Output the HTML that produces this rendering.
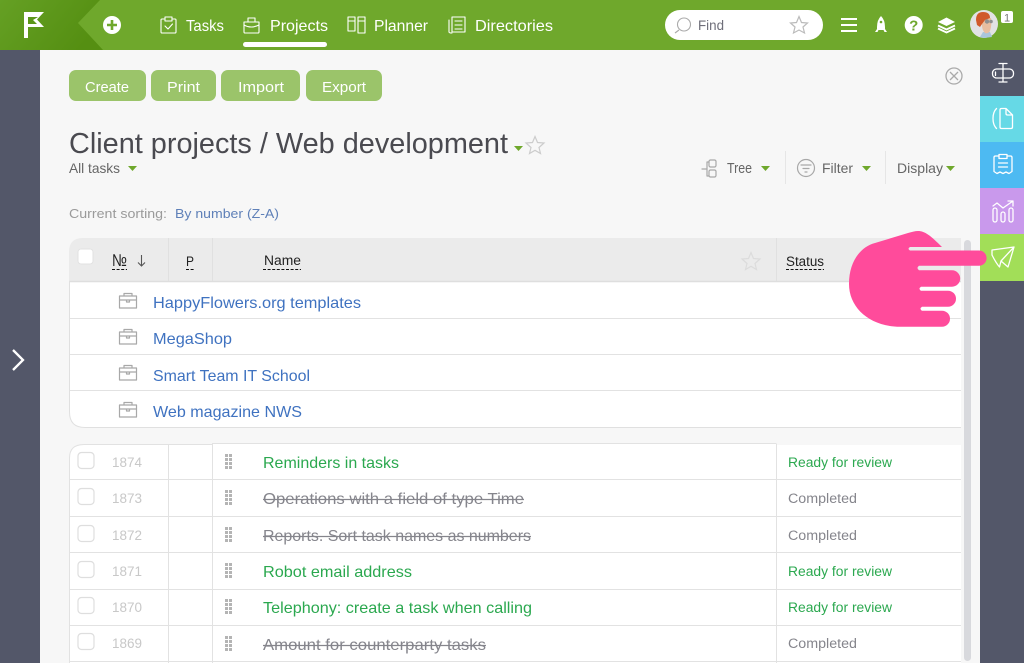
<!DOCTYPE html>
<html><head><meta charset="utf-8"><title>Client projects</title>
<style>
html,body{margin:0;padding:0;width:1024px;height:663px;overflow:hidden;background:#f7f7f7}
svg{display:block}
text{font-family:"Liberation Sans",sans-serif}
.n{fill:#fff;font-size:16px}
.b{fill:#fff;font-size:15px}
.l{fill:#3f72c0;font-size:16px}
.g{fill:#2ba84f;font-size:16px}
.c{fill:#85858c;font-size:16px}
.no{fill:#c8c8c8;font-size:14px}
.sg{fill:#2ba84f;font-size:13.5px}
.sc{fill:#85858c;font-size:13.5px}
.h{fill:#222;font-size:13.5px}
.t{fill:#666;font-size:14px}
.i{fill:none;stroke:#fff;stroke-width:1.1;stroke-linejoin:round;stroke-linecap:round}
.gi{fill:none;stroke:#a8a8a8;stroke-width:1.2;stroke-linejoin:round;stroke-linecap:round}
.ln{stroke:#e2e2e2;stroke-width:1}
.da{stroke:#111;stroke-width:1;stroke-dasharray:3 1.6}
.cb{fill:#fff;stroke:#dedede;stroke-width:1.2}
.st{stroke:#85858c;stroke-width:1.2}
</style></head>
<body>
<svg width="1024" height="663" viewBox="0 0 1024 663" xmlns="http://www.w3.org/2000/svg">
<defs><linearGradient id="lg" x1="0" y1="0" x2="1" y2="0.4"><stop offset="0" stop-color="#65a024"/><stop offset="1" stop-color="#558f12"/></linearGradient></defs>
<rect width="1024" height="663" fill="#f7f7f7"/>
<rect x="0" y="50" width="40" height="613" fill="#535769"/>
<rect x="980" y="50" width="44" height="613" fill="#535769"/>
<rect x="0" y="0" width="1024" height="50" fill="#6fa82c"/>
<polygon points="0,0 100,0 78,23 103,50 0,50" fill="url(#lg)"/>
<path d="M24 12H44L37 19.500 44 27H28V38H24Z" fill="#fff"/>
<path d="M28 17H38L33 20 37 24H28Z" fill="#5b9619"/>
<circle cx="112" cy="25" r="9" fill="#fff"/><path d="M107 25H117M112 20V30" stroke="#6fa82c" stroke-width="2.600"/>

<!-- nav -->
<path class="i" d="M164 19H162Q161 19 161 20V32Q161 33 162 33H175Q176 33 176 32V20Q176 19 175 19H173M165 17H172V21H165ZM165 26L168 29 172.500 24"/>
<text class="n" x="186" y="31" textLength="38" lengthAdjust="spacingAndGlyphs">Tasks</text>
<path class="i" d="M244 22H259V32Q259 33 258 33H245Q244 33 244 32ZM244 22V25Q251 29 259 25V22M248 22V18H255V22"/>
<text class="n" x="270" y="31" textLength="58" lengthAdjust="spacingAndGlyphs">Projects</text>
<rect x="243" y="42" width="84" height="5" rx="2.500" fill="#fff"/>
<path class="i" d="M348 17H355V31H348ZM358 17H365V33H358ZM348 21H355M358 21H365"/>
<text class="n" x="374" y="31" textLength="54" lengthAdjust="spacingAndGlyphs">Planner</text>
<path class="i" d="M452 17H465V32H452ZM449 20V32Q449 33 452 33M455 21H462M455 25H462M455 29H462"/>
<text class="n" x="475" y="31" textLength="78" lengthAdjust="spacingAndGlyphs">Directories</text>

<!-- search -->
<rect x="665" y="10" width="158" height="30" rx="15" fill="#fff"/>
<circle cx="684" cy="24.500" r="6.500" fill="none" stroke="#aaa" stroke-width="1.100"/><path d="M679 30L675 33" stroke="#aaa" stroke-width="1.100"/>
<text x="698" y="30" font-size="14" fill="#6f6f7a" textLength="26" lengthAdjust="spacingAndGlyphs">Find</text>
<path d="M799 16.500L801.500 22.500 807.500 23 803 27 804.500 33 799 30 793.500 33 795 27 790.500 23 796.500 22.500Z" fill="none" stroke="#bbb" stroke-width="1.200"/>
<path d="M841 19H857M841 25H857M841 31H857" stroke="#fff" stroke-width="2"/>
<path d="M881 16Q885 20 885 27V29L887 32H884.500L883.500 30H878.500L877.500 32H875L877 29V27Q877 20 881 16Z" fill="#fff"/><circle cx="881" cy="22" r="1.300" fill="#6fa82c"/>
<circle cx="913.700" cy="25" r="9" fill="#fff"/>
<text x="913.700" y="30.500" font-size="15" font-weight="700" fill="#6fa82c" text-anchor="middle">?</text>
<path d="M946.500 17.500L955 22 946.500 26 938 22Z" fill="#fff"/><path d="M938 25.500L946.500 29.500 955 25.500M938 28.500L946.500 32.500 955 28.500" fill="none" stroke="#fff" stroke-width="1.800"/>
<circle cx="984" cy="24" r="14" fill="#e2e2e4"/>
<path d="M983 32L990 32 992 37 984 38 980 37Z" fill="#a9c6dc"/>
<path d="M981 18H991Q992 25 990 31 988 34 985 33 982 30 982 25Z" fill="#e8bea0"/>
<path d="M976 20Q976 12 983 12 990 12 990 18L985 20 982 24 980 27 977 25Z" fill="#d0592a"/>
<circle cx="987" cy="21.500" r="2.200" fill="#8f9090"/><circle cx="991" cy="21.500" r="1.800" fill="#8f9090"/>
<rect x="1001" y="11" width="12" height="12" rx="2" fill="#fff"/>
<text x="1007" y="21.500" font-size="11" fill="#777" text-anchor="middle">1</text>

<!-- right tabs -->
<rect x="980" y="96" width="44" height="46" fill="#66d9e6"/>
<rect x="980" y="142" width="44" height="46" fill="#4dbaf2"/>
<rect x="980" y="188" width="44" height="46" fill="#c999ec"/>
<rect x="980" y="234" width="44" height="47" fill="#a2de58"/>
<g class="i" stroke-width="1.300" style="stroke-width:1.300">
<rect x="992.500" y="69" width="21" height="9" rx="4"/>
<path d="M1003 63.500V82M999 63.500H1007M999 82H1007M995.500 72V75.500"/>
<path d="M1000 110Q1000 108.500 1001.500 108.500H1006L1012.500 115V127Q1012.500 128.500 1011 128.500H1001.500Q1000 128.500 1000 127ZM1006 108.500V113.500Q1006 115 1007.500 115H1012.500M996.500 108.500Q993 112 993 118.500 993 125 996.500 128.500"/>
<path d="M999 156H995.500Q994 156 994 157.500V171.500L997 173.500 1000 172 1003 173.500 1006 172 1009 173.500 1012 171.500V157.500Q1012 156 1010.500 156H1007M999 154.500H1007V158.500H999ZM998.500 163H1007.500M998.500 167H1007.500"/>
<path d="M993 206L997 203 1003 208 1013 201M1008 201H1013V206"/>
<rect x="993" y="208" width="4" height="14" rx="2"/><rect x="1001" y="212" width="4" height="10" rx="2"/><rect x="1009" y="208" width="4" height="14" rx="2"/>
<path d="M992 250L1014 247 1008 267 1001 261 999.500 267Q996 263 992 255ZM1014 247L1001 261"/>
</g>

<!-- left chevron -->
<path d="M13 350L23 360 13 370" fill="none" stroke="#fff" stroke-width="2.300"/>

<!-- close -->
<circle cx="954" cy="76" r="8" fill="none" stroke="#aaa" stroke-width="1.300"/><path d="M950 72L958 80M958 72L950 80" stroke="#aaa" stroke-width="1.300"/>

<!-- buttons -->
<g fill="#9bc46a"><rect x="69" y="70" width="77" height="31" rx="7"/><rect x="151" y="70" width="65" height="31" rx="7"/><rect x="221" y="70" width="79" height="31" rx="7"/><rect x="306" y="70" width="76" height="31" rx="7"/></g>
<text class="b" x="85" y="92" textLength="44" lengthAdjust="spacingAndGlyphs">Create</text>
<text class="b" x="167" y="92" textLength="33" lengthAdjust="spacingAndGlyphs">Print</text>
<text class="b" x="238" y="92" textLength="46" lengthAdjust="spacingAndGlyphs">Import</text>
<text class="b" x="322" y="92" textLength="44" lengthAdjust="spacingAndGlyphs">Export</text>

<!-- title -->
<text x="69" y="153" font-size="29" fill="#4a4a50" textLength="439" lengthAdjust="spacingAndGlyphs">Client projects / Web development</text>
<path d="M514 146H523L518.500 151Z" fill="#6fa82c"/>
<path d="M535 136.500L537.500 142.500 544 143 539 147.500 540.500 153.500 535 150.300 529.500 153.500 531 147.500 526 143 532.500 142.500Z" fill="none" stroke="#ccc" stroke-width="1.200"/>
<text class="t" x="69" y="173" textLength="51" lengthAdjust="spacingAndGlyphs">All tasks</text>
<path d="M128 166H137L132.500 171Z" fill="#6fa82c"/>
<path class="gi" d="M702 169H707M707 162V176M707 162H709M707 176H709"/>
<rect class="gi" x="709" y="160" width="7" height="7" rx="1.500"/><rect class="gi" x="709" y="170" width="7" height="7" rx="1.500"/>
<text class="t" x="727" y="173" style="font-size:15px" textLength="25" lengthAdjust="spacingAndGlyphs">Tree</text>
<path d="M761 166H770L765.500 171Z" fill="#6fa82c"/>
<circle class="gi" cx="806" cy="168" r="8.500"/><path class="gi" d="M801 165H811M803 168.500H809M805 172H807"/>
<text class="t" x="822" y="173" textLength="31" lengthAdjust="spacingAndGlyphs">Filter</text>
<path d="M862 166H871L866.500 171Z" fill="#6fa82c"/>
<text class="t" x="897" y="173" textLength="46" lengthAdjust="spacingAndGlyphs">Display</text>
<path d="M946 166H955L950.500 171Z" fill="#6fa82c"/>
<path d="M785.500 151V184M885.500 151V184" stroke="#e6e6e6" stroke-width="1"/>
<text x="69" y="218" font-size="13" fill="#9a9a9a" textLength="98" lengthAdjust="spacingAndGlyphs">Current sorting:</text>
<text x="175" y="218" font-size="13" fill="#5f80b8" textLength="104" lengthAdjust="spacingAndGlyphs">By number (Z-A)</text>

<!-- top table -->
<path d="M961 282V428H85Q70 428 70 413V282Z" fill="#fff"/>
<path d="M961 238V281H69V252Q69 238 83 238Z" fill="#ebebeb"/>
<path d="M69 281.500H961" stroke="#dedede" stroke-width="1.500"/>
<path d="M69.500 281V412Q69.500 427.500 85 427.500H961" fill="none" stroke="#e0e0e0" stroke-width="1"/>
<path d="M70 318.500H961M70 354.500H961M70 390.500H961" class="ln"/>
<path d="M168.500 238V281M212.500 238V281M776.500 238V281" stroke="#e0e0e0"/>
<rect x="78" y="249" width="15" height="15" rx="3" fill="#fff" stroke="#e2e2e2"/>
<text class="h" x="112" y="266" style="font-size:17px" textLength="15" lengthAdjust="spacingAndGlyphs">№</text><path class="da" d="M112 269.500H127"/>
<path d="M141.500 255V266M138 262.500L141.500 266 145 262.500" fill="none" stroke="#555" stroke-width="1.100"/>
<text class="h" x="186" y="266" textLength="8" lengthAdjust="spacingAndGlyphs">P</text><path class="da" d="M186 269.500H194"/>
<text class="h" x="264" y="265" textLength="37" lengthAdjust="spacingAndGlyphs">Name</text><path class="da" d="M263 269.500H301"/>
<text class="h" x="786" y="266" textLength="38" lengthAdjust="spacingAndGlyphs">Status</text><path class="da" d="M786 269.500H824"/>
<path d="M751 252.500L753.500 258.500 760 259 755 263.500 756.500 269.500 751 266.300 745.500 269.500 747 263.500 742 259 748.500 258.500Z" fill="none" stroke="#dcdcdc" stroke-width="1.200"/>

<g class="gi">
<path d="M119.500 296H136.500V308H119.500ZM119.500 300H136.500M124 296V293.500H132V296M126.500 300V302H129.500V300"/>
<path d="M119.500 332H136.500V344H119.500ZM119.500 336H136.500M124 332V329.500H132V332M126.500 336V338H129.500V336"/>
<path d="M119.500 368H136.500V380H119.500ZM119.500 372H136.500M124 368V365.500H132V368M126.500 372V374H129.500V372"/>
<path d="M119.500 405H136.500V417H119.500ZM119.500 409H136.500M124 405V402.500H132V405M126.500 409V411H129.500V409"/>
</g>
<text class="l" x="153" y="308" textLength="208" lengthAdjust="spacingAndGlyphs">HappyFlowers.org templates</text>
<text class="l" x="153" y="344" textLength="79" lengthAdjust="spacingAndGlyphs">MegaShop</text>
<text class="l" x="153" y="381" textLength="157" lengthAdjust="spacingAndGlyphs">Smart Team IT School</text>
<text class="l" x="153" y="417" textLength="149" lengthAdjust="spacingAndGlyphs">Web magazine NWS</text>

<!-- lower table -->
<path d="M961 445H776V444H212V445H84Q70 445 70 458V663H961Z" fill="#fff"/>
<path d="M69.500 663V458Q69.500 444.500 84 444.500H212M212 443.500H776.500" fill="none" stroke="#e2e2e2" stroke-width="1"/>
<path d="M70 479.500H961M70 516.500H961M70 552.500H961M70 589.500H961M70 625.500H961M70 661.500H961" class="ln"/>
<path d="M168.500 444V663M212.500 444V663M776.500 444V663" class="ln"/>

<g class="cb">
<rect x="78" y="452.500" width="16" height="16" rx="3.500"/>
<rect x="78" y="488.500" width="16" height="16" rx="3.500"/>
<rect x="78" y="525.500" width="16" height="16" rx="3.500"/>
<rect x="78" y="561.500" width="16" height="16" rx="3.500"/>
<rect x="78" y="597.500" width="16" height="16" rx="3.500"/>
<rect x="78" y="633.500" width="16" height="16" rx="3.500"/>
</g>
<text class="no" x="112" y="467" textLength="30" lengthAdjust="spacingAndGlyphs">1874</text>
<text class="no" x="112" y="503" textLength="30" lengthAdjust="spacingAndGlyphs">1873</text>
<text class="no" x="112" y="540" textLength="30" lengthAdjust="spacingAndGlyphs">1872</text>
<text class="no" x="112" y="576" textLength="30" lengthAdjust="spacingAndGlyphs">1871</text>
<text class="no" x="112" y="612" textLength="30" lengthAdjust="spacingAndGlyphs">1870</text>
<text class="no" x="112" y="648" textLength="30" lengthAdjust="spacingAndGlyphs">1869</text>

<g fill="none" stroke="#b4b4b4" stroke-width="3" stroke-dasharray="3 1">
<path d="M226.500 454V469M230.500 454V469"/>
<path d="M226.500 490V505M230.500 490V505"/>
<path d="M226.500 527V542M230.500 527V542"/>
<path d="M226.500 563V578M230.500 563V578"/>
<path d="M226.500 599V614M230.500 599V614"/>
<path d="M226.500 636V651M230.500 636V651"/>
</g>

<text class="g" x="263" y="468" textLength="136" lengthAdjust="spacingAndGlyphs">Reminders in tasks</text>
<text class="c" x="263" y="504" textLength="261" lengthAdjust="spacingAndGlyphs">Operations with a field of type Time</text><path class="st" d="M263 499.500H524"/>
<text class="c" x="263" y="541" textLength="268" lengthAdjust="spacingAndGlyphs">Reports. Sort task names as numbers</text><path class="st" d="M263 536.500H531"/>
<text class="g" x="263" y="577" textLength="149" lengthAdjust="spacingAndGlyphs">Robot email address</text>
<text class="g" x="263" y="613" textLength="269" lengthAdjust="spacingAndGlyphs">Telephony: create a task when calling</text>
<text class="c" x="263" y="650" textLength="223" lengthAdjust="spacingAndGlyphs">Amount for counterparty tasks</text><path class="st" d="M263 645.500H486"/>

<text class="sg" x="788" y="467" textLength="104" lengthAdjust="spacingAndGlyphs">Ready for review</text>
<text class="sc" x="788" y="503" textLength="69" lengthAdjust="spacingAndGlyphs">Completed</text>
<text class="sc" x="788" y="540" textLength="69" lengthAdjust="spacingAndGlyphs">Completed</text>
<text class="sg" x="788" y="576" textLength="104" lengthAdjust="spacingAndGlyphs">Ready for review</text>
<text class="sg" x="788" y="612" textLength="104" lengthAdjust="spacingAndGlyphs">Ready for review</text>
<text class="sc" x="788" y="648" textLength="69" lengthAdjust="spacingAndGlyphs">Completed</text>

<!-- scrollbar -->
<rect x="964" y="240" width="7" height="421" rx="3.500" fill="#d8d9dd"/>

<!-- hand -->
<path fill="#ff4b9b" d="M918 231C925 231 931 236 942 247L910 247Q907 248.700 910 250.500L979 250.500A7.600 7.600 0 0 1 979 265.700L919 265.700Q916 268 919 270.300L952 270.300A8.200 8.200 0 0 1 952 286.700L921 286.700Q918 288.700 921 290.700L948 290.700A8 8 0 0 1 948 306.700L922 306.700Q919 308.700 922 310.700L942 310.700A8 8 0 0 1 942 326.700L900 326.700C870 326.700 849 308 849 284C849 262 860 247 875 243L908 233C912 232 915 231 918 231Z"/>
</svg>
</body></html>
